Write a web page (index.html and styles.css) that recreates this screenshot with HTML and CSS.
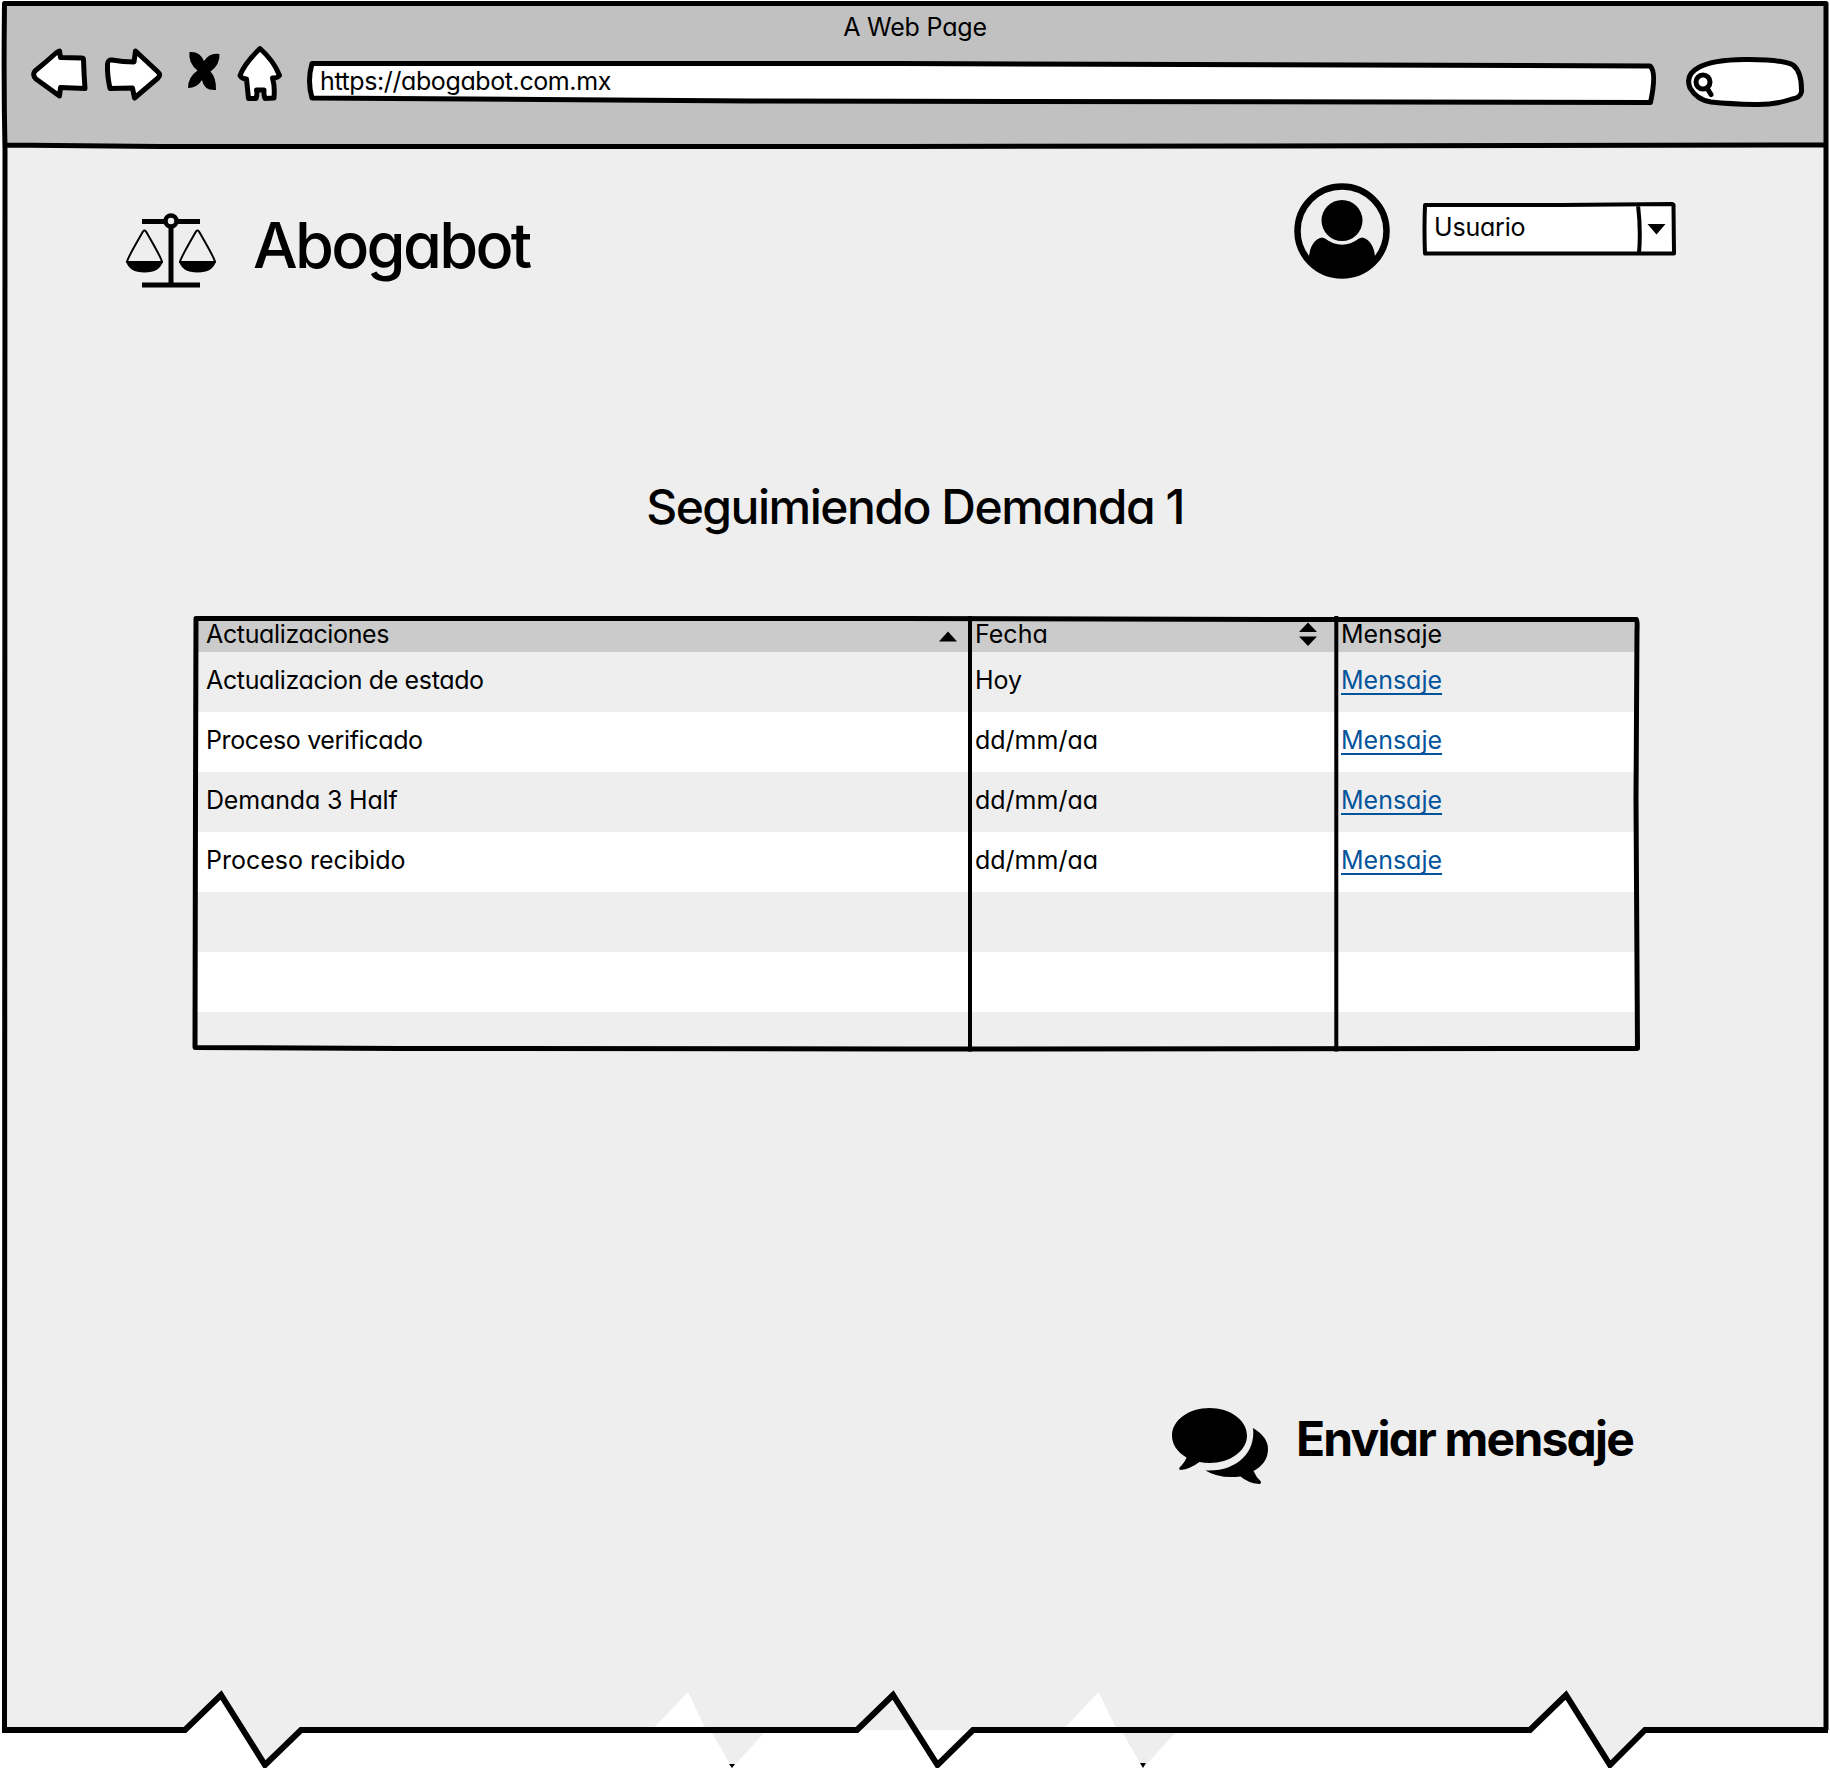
FILE: index.html
```html
<!DOCTYPE html>
<html lang="es">
<head>
<meta charset="utf-8">
<title>Abogabot</title>
<link rel="stylesheet" href="styles.css">
</head>
<body>
<div class="window">
  <svg class="frame" viewBox="0 0 1830 1768" aria-hidden="true">
    <path class="paper" d="M5 4H1826V1730H1645L1610 1765L1566 1695L1530 1730H301L265 1765L221 1695L185 1730H5Z"/>
    <path class="toolbar-fill" d="M5 4H1826V145.500H5Z"/>
    <path class="torn" d="M652 1730L688 1692L706 1730ZM858 1730H973L937 1763ZM1063 1730L1098.500 1692L1117 1730Z"/>
    <path class="paper" d="M710.500 1730H767L732 1768ZM1121 1730H1178L1143 1768Z"/>
    <path d="M729 1764H735L732 1768ZM1140 1763H1146L1143 1768Z"/>
    <path class="edge" d="M4.500 1730L5 150Q3.500 80 4.500 3.500H1826V1730M4.500 145Q90 146 160 146.500H900L1826 145"/>
    <path class="edge torn-edge" d="M2 1730H185L221 1695L265 1765L301 1730H857L893 1695L937.500 1765L973 1730H1530L1566 1695L1610 1765L1645 1730H1828"/>
  </svg>

  <header class="browser">
    <div class="browser-title">A Web Page</div>
    <nav class="browser-nav">
      <svg class="nav-icon" width="60" height="60" viewBox="30 44 60 60"><path class="sketch" d="M59.500 51L60.500 57.500L82 58Q83.500 58 83.500 60Q84 75 85 88.500L60.500 87.500L59.500 96L36 79Q32 75 35 71Q46 62 56 53Z"/></svg>
      <svg class="nav-icon nav-forward" width="64" height="60" viewBox="102 44 64 60"><path class="sketch" d="M107.500 64Q108 59.500 112 60Q123 62 134 62L135.500 51L158 72Q161 75 158 78L134.500 98L132.500 88L110 88.500Q107 75 107.500 64Z"/></svg>
      <svg class="nav-icon nav-stop" width="36" height="60" viewBox="186 44 36 60"><path d="M189.500 52Q200 51 204 61Q210 52 219.500 54Q220 65 210.500 71.500Q216.500 78 216 90Q204 91 202 80Q197 88 188 88Q188 77 197.500 70.500Q188 63 189.500 52Z"/></svg>
      <svg class="nav-icon nav-home" width="54" height="60" viewBox="234 44 54 60"><path class="sketch" d="M260 48.500Q274 61 279.500 75.500Q277 78.500 272.500 78Q275 86 274 98L265 98.500Q263.500 94 264 90H256.500Q257.500 94 256 98.500H248.500L246.500 79Q242 79 240 75.500Q244 64 260 48.500Z"/></svg>
      <div class="address">
        <svg width="1356" height="60" viewBox="302 54 1356 60"><path class="sketch" d="M312 63.500H900Q1300 65 1650 66Q1657 72 1650.500 102.500Q1100 103 750 101L312 98Q307 81 312 63.500Z"/></svg>
        <span class="address-text">https://abogabot.com.mx</span>
      </div>
      <svg class="nav-icon nav-search" width="126" height="60" viewBox="1682 54 126 60"><path class="sketch" d="M1711 102Q1697 100 1690 88C1683 70 1703 60 1744 59.500Q1780 59 1793 65Q1802 72 1801.500 92Q1800 98 1792 99Q1775 105 1755 104.500Q1730 104 1711 102Z"/><circle class="lens" cx="1703" cy="82" r="7"/><path class="lens" d="M1707 88L1711 94.500"/></svg>
    </nav>
  </header>

  <main class="page">
    <section class="topbar">
      <div class="brand">
        <svg width="92" height="78" viewBox="125 212 92 78"><path d="M142 219H200V224H142ZM142 282.500H200V287.500H142ZM168.500 228H173.500V284H168.500Z"/><circle class="ring" cx="171" cy="221" r="5.500"/><g id="pan"><path class="wire" d="M127 262Q127 259 143 231.500Q144.500 229.500 146 231.500Q162 259 162 262Z"/><path d="M126 261H163Q160 272.500 144.500 272.500Q129 272.500 126 261Z"/></g><use href="#pan" x="53"/></svg>
        <h1 class="brand-name">Abogabot</h1>
      </div>
      <div class="account">
        <svg width="96" height="96" viewBox="1294 183 96 96"><circle class="avatar-ring" cx="1342" cy="231" r="44.500"/><circle cx="1342" cy="220.500" r="20.500"/><path d="M1309 256Q1311 240 1322 237.500L1325 238.500Q1342 251 1359 238.500L1362 237.500Q1373 240 1375 256Q1371 270 1342 277Q1316 272 1309 256Z"/></svg>
        <div class="combo">
          <svg width="256" height="56" viewBox="1421 201 256 56"><path class="combo-edge" d="M1425 205H1560L1672 204Q1674 204 1673.500 207L1674 253.500L1425 253.500Q1424 230 1425 205ZM1638 205Q1641 230 1639 253.500"/><path d="M1647.500 224H1665.500L1656.500 234.500Z"/></svg>
          <span class="combo-text">Usuario</span>
        </div>
      </div>
    </section>

    <h2 class="title">Seguimiendo Demanda 1</h2>

    <div class="grid">
      <table class="cases">
        <colgroup><col class="col-update"><col class="col-date"><col></colgroup>
        <thead>
          <tr>
            <th><div class="head"><span class="tight">Actualizaciones</span><svg width="18" height="24" viewBox="0 0 18 24"><path d="M0 19.500L9 9.500L18 19.500Z"/></svg></div></th>
            <th><div class="head head-date"><span>Fecha</span><svg width="18" height="24" viewBox="0 0 18 24"><path d="M0 10L9 .5L18 10ZM0 14.500H18L9 24Z"/></svg></div></th>
            <th><div class="head"><span>Mensaje</span></div></th>
          </tr>
        </thead>
        <tbody>
          <tr><td class="tight">Actualizacion de estado</td><td>Hoy</td><td><a class="link">Mensaje</a></td></tr>
          <tr><td class="tight">Proceso verificado</td><td>dd/mm/aa</td><td><a class="link">Mensaje</a></td></tr>
          <tr><td class="snug">Demanda 3 Half</td><td>dd/mm/aa</td><td><a class="link">Mensaje</a></td></tr>
          <tr><td>Proceso recibido</td><td>dd/mm/aa</td><td><a class="link">Mensaje</a></td></tr>
          <tr><td></td><td></td><td></td></tr>
          <tr><td></td><td></td><td></td></tr>
          <tr class="last"><td></td><td></td><td></td></tr>
        </tbody>
      </table>
      <svg class="grid-lines" viewBox="192 615 1450 437" aria-hidden="true"><path class="edge" d="M196 618.500H900L1300 619.500L1636.500 619.500Q1637.500 620 1637 630L1636 800L1637.500 1048.500L900 1049L400 1048.500L195 1047.500L195.500 800Z"/><path class="divider" d="M970 616V1051.500M1336.300 616V1051.500"/></svg>
    </div>

    <div class="send">
      <svg width="98" height="78" viewBox="1171 1407 98 78"><path d="M1209.500 1408C1230 1408 1247 1420 1247 1435.500C1247 1451 1230 1463 1209.500 1463Q1204 1463 1199.500 1462Q1190 1469 1180.500 1470Q1178 1469 1180 1467Q1185 1462 1186.500 1457.500C1177 1452 1172 1444 1172 1435.500C1172 1420 1189 1408 1209.500 1408Z"/><path d="M1253 1428Q1268 1437 1268 1449Q1268 1463 1253.500 1471Q1256 1477 1260.500 1481Q1262 1484 1259 1484Q1248 1483 1240.500 1476.500Q1219 1479 1205.500 1470.500C1237 1472 1256 1452 1253 1428Z"/></svg>
      <span class="send-text">Enviar mensaje</span>
    </div>
  </main>
</div>
</body>
</html>
```

FILE: styles.css
```css
* { box-sizing: border-box; }
body {
  margin: 0;
  background: #fff;
  color: #000;
  font: 400 25px/30px Inter, "Liberation Sans", sans-serif;
  font-feature-settings: "cv11";
}
svg { display: block; flex: none; }
h1, h2 { margin: 0; }

.window { position: relative; isolation: isolate; width: 1830px; height: 1768px; overflow: hidden; }
.frame { position: absolute; inset: 0; width: 1830px; height: 1768px; z-index: -1; }
.paper { fill: #eee; }
.toolbar-fill { fill: #c1c1c1; }
.torn { fill: #fff; }
.edge { fill: none; stroke: #000; stroke-width: 5; stroke-linejoin: round; }
.torn-edge { stroke-width: 6; stroke-linejoin: miter; }
.sketch { fill: #fff; stroke: #000; stroke-width: 5; stroke-linejoin: round; }
.lens { fill: none; stroke: #000; stroke-width: 5; stroke-linecap: round; }

.browser { height: 148px; padding-top: 12px; }
.browser-title { text-align: center; letter-spacing: -.2px; }
.browser-nav { display: flex; align-items: flex-start; padding: 2px 0 0 30px; }
.nav-forward { margin-left: 12px; }
.nav-stop { margin-left: 20px; }
.nav-home { margin-left: 12px; }
.address { display: grid; margin: 10px 0 0 14px; }
.address > *, .combo > * { grid-area: 1 / 1; }
.address-text { padding: 12px 0 0 18px; letter-spacing: -.4px; }
.nav-search { margin: 10px 0 0 24px; }

.page { padding-top: 35px; }
.topbar { display: flex; justify-content: space-between; align-items: flex-start; padding: 0 153px 0 125px; }
.brand { display: flex; padding-top: 29px; }
.brand-name { padding-left: 36px; font-size: 63px; line-height: 66px; font-weight: 500; letter-spacing: -2.7px; }
.ring { fill: #eee; stroke: #000; stroke-width: 4.5; }
.wire { fill: none; stroke: #000; stroke-width: 2; }
.account { display: flex; gap: 31px; }
.avatar-ring { fill: none; stroke: #000; stroke-width: 6.5; }
.combo { display: grid; padding-top: 18px; }
.combo-edge { fill: #fff; stroke: #000; stroke-width: 4; stroke-linejoin: round; }
.combo-text { padding: 11px 0 0 13px; letter-spacing: -.2px; }

.title { margin-top: 187px; text-align: center; font-size: 48px; line-height: 60px; font-weight: 500; letter-spacing: -1.5px; }

.grid { position: relative; width: 1450px; margin: 78px 0 0 192px; padding: 3px 4px 4px; }
.cases { width: 1442px; table-layout: fixed; border-collapse: collapse; }
.col-update { width: 774px; }
.col-date { width: 366px; }
th, td { padding: 0 0 4px 5px; text-align: left; font-weight: 400; }
th:first-child, td:first-child { padding-left: 10px; }
th { height: 34px; padding-top: 0; padding-bottom: 2px; background: #cbcbcb; }
td { height: 60px; }
tbody tr:nth-child(even) { background: #fff; }
.last td { height: 36px; }
.tight { letter-spacing: -.36px; }
.snug { letter-spacing: -.17px; }
.head { display: flex; justify-content: space-between; align-items: center; padding-right: 13px; }
.head-date { padding-right: 19px; }
.link { color: #04549c; text-decoration: underline; text-decoration-thickness: 2px; text-underline-offset: 4px; text-decoration-skip-ink: none; }
.grid-lines { position: absolute; inset: 0; width: 1450px; height: 437px; }
.divider { fill: none; stroke: #000; stroke-width: 4; }

.send { display: flex; margin: 355px 0 0 1171px; }
.send-text { padding: 0 0 0 27px; font-size: 48px; line-height: 63px; font-weight: 700; letter-spacing: -1.8px; }
```
